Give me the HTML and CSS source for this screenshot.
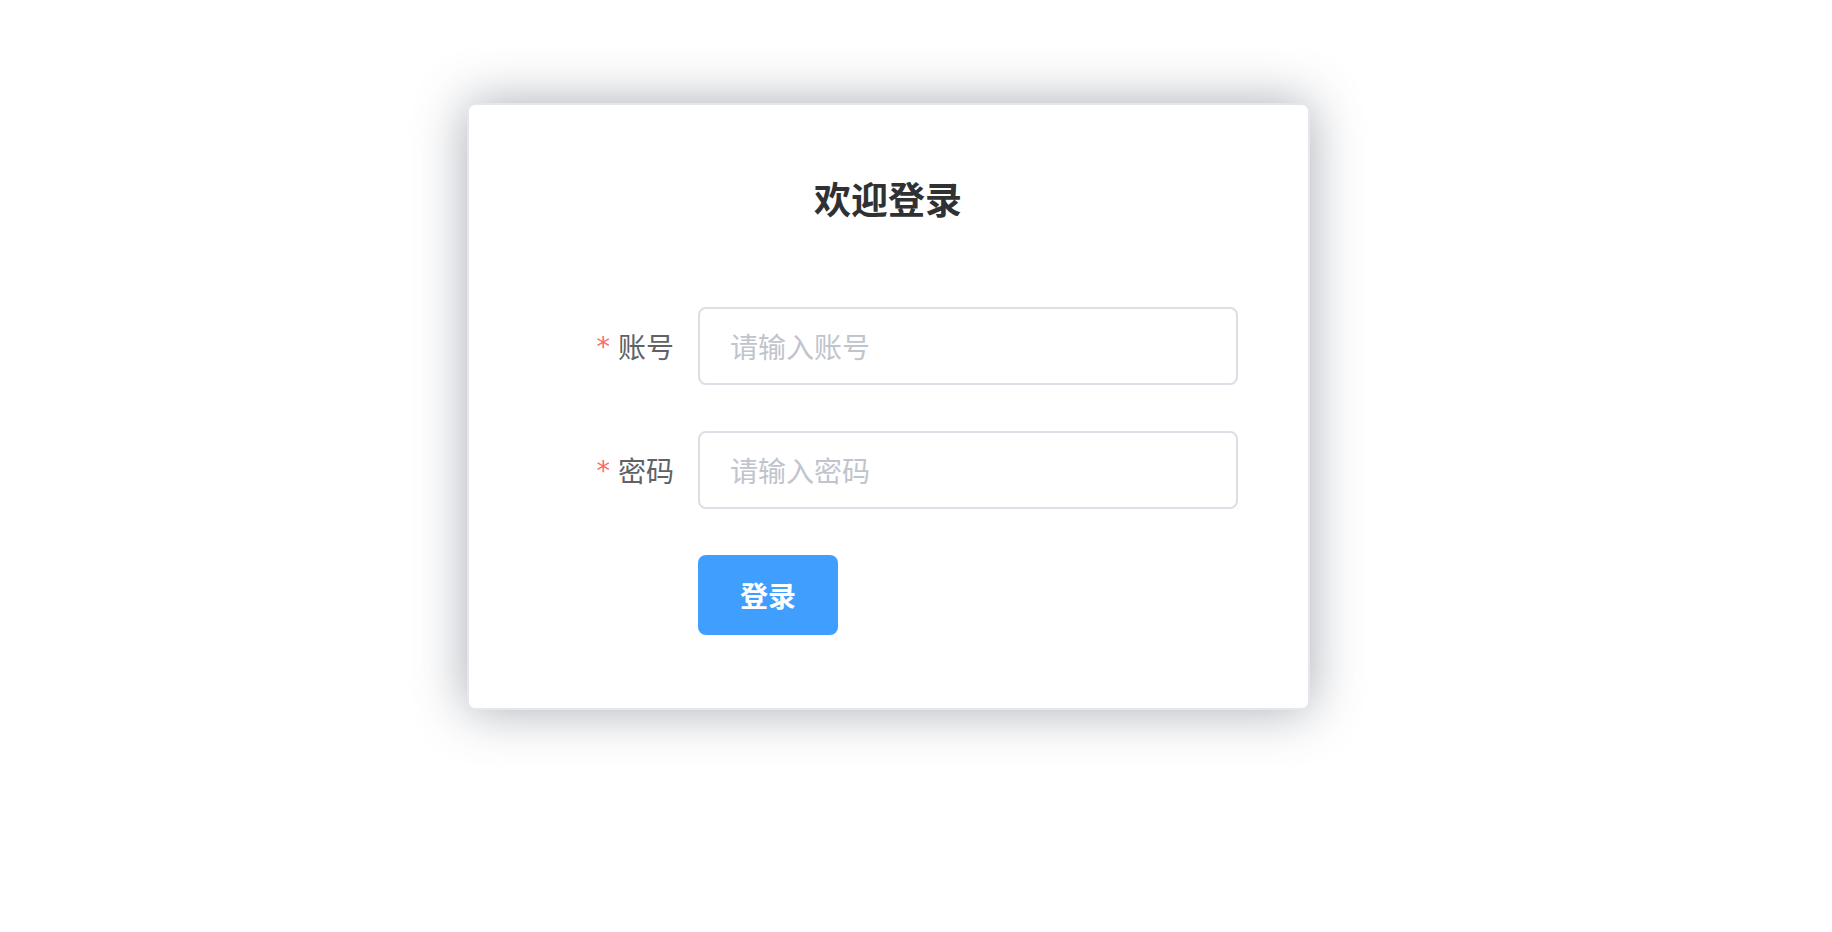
FILE: index.html
```html
<!DOCTYPE html>
<html lang="zh-CN">
    <head>
        <meta charset="UTF-8" />
        <meta name="viewport" content="width=device-width, initial-scale=1.0" />
        <title>登录</title>
        <link rel="stylesheet" href="styles.css">
    </head>
    <body>
        <div class="login-card">
            <h2 class="login-title">欢迎登录</h2>
            <form class="login-form">
                <div class="form-item">
                    <label class="form-label is-required" for="username">账号</label>
                    <input class="form-input" type="text" id="username" placeholder="请输入账号" />
                </div>
                <div class="form-item">
                    <label class="form-label is-required" for="password">密码</label>
                    <input class="form-input" type="password" id="password" placeholder="请输入密码" />
                </div>
                <div class="form-item">
                    <span class="form-label"></span>
                    <button class="login-btn" type="button">登录</button>
                </div>
            </form>
        </div>
    </body>
</html>
```

FILE: styles.css
```css
* {
    margin: 0;
    padding: 0;
    box-sizing: border-box;
}
html,
body {
    width: 100%;
    height: 100%;
    background-color: white;
    font-family: "Noto Sans CJK SC", "Noto Sans", sans-serif;
}
.login-card {
    width: 843px;
    height: 607px;
    margin: 103px 0 0 467px;
    padding: 75px 70px 0 69px;
    background-color: white;
    border: 2px solid #e4e7ed;
    border-radius: 8px;
    box-shadow: 0 0 52px rgba(70, 78, 95, 0.47);
}
.login-title {
    text-align: center;
    font-size: 37px;
    line-height: 37px;
    font-weight: bold;
    color: #303133;
    margin-bottom: 90px;
}
.login-form {
    display: flex;
    flex-direction: column;
    gap: 46px;
}
.form-item {
    display: flex;
    align-items: center;
}
.form-label {
    width: 160px;
    flex-shrink: 0;
    padding-right: 24px;
    text-align: right;
    font-size: 28px;
    color: #606266;
    &.is-required::before {
        content: "*";
        font-family: "DejaVu Sans", sans-serif;
        font-size: 27px;
        color: #f56c6c;
        margin-right: 8px;
        position: relative;
        top: -2px;
    }
}
.form-input {
    flex: 1;
    height: 78px;
    padding: 0 30px;
    border: 2px solid #dcdfe6;
    border-radius: 8px;
    font-family: inherit;
    font-size: 28px;
    color: #606266;
    outline: none;
    &::placeholder {
        color: #c0c4cc;
    }
}
.login-btn {
    width: 140px;
    height: 80px;
    border: none;
    border-radius: 8px;
    background-color: #409eff;
    color: white;
    font-family: inherit;
    font-size: 28px;
    font-weight: bold;
}
```
